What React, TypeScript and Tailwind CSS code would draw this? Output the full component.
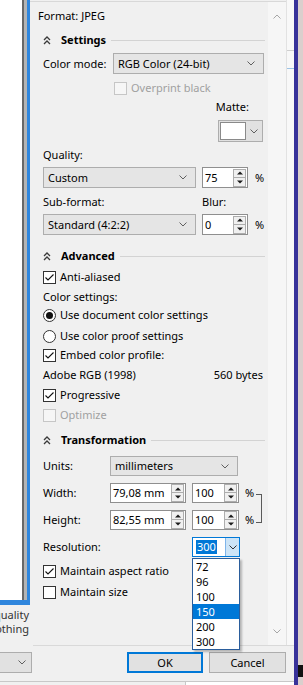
import React from 'react';

const Chevron = ({ color = '#5f5f5f' }: { color?: string }) => (
  <svg width="8" height="5" viewBox="0 0 8 5" className="shrink-0">
    <path d="M0.5 0.5 L4 4 L7.5 0.5" fill="none" stroke={color} strokeWidth="1" />
  </svg>
);

const ChevronUp = ({ color = '#a6a6a6' }: { color?: string }) => (
  <svg width="8" height="5" viewBox="0 0 8 5" className="shrink-0">
    <path d="M0.5 4.5 L4 1 L7.5 4.5" fill="none" stroke={color} strokeWidth="1" />
  </svg>
);

const Select = ({ text, w }: { text: string; w: string }) => (
  <div className={`${w} h-[21px] shrink-0 flex items-center justify-between border border-[#adadad] bg-[#e5e5e5] pl-[4px] pr-[8px]`}>
    <span className="whitespace-nowrap">{text}</span>
    <Chevron />
  </div>
);

const Tri = ({ up }: { up?: boolean }) => (
  <svg width="6" height="4" viewBox="0 0 6 4">
    <path d={up ? 'M0 3.5 L3 0.5 L6 3.5 Z' : 'M0 0.5 L3 3.5 L6 0.5 Z'} fill="#1a1a1a" />
  </svg>
);

const Spin = ({ text, w, h = 'h-[21px]' }: { text: string; w: string; h?: string }) => (
  <div className={`${w} ${h} shrink-0 flex items-center border border-[#8f8f8f] bg-white pl-[2px] pr-[1px]`}>
    <span className="flex-1 whitespace-nowrap">{text}</span>
    <div className="w-[13px] flex flex-col">
      <div className="h-[9px] border border-[#adadad] bg-[#f0f0f0] flex items-center justify-center">
        <Tri up />
      </div>
      <div className="h-[9px] border border-t-0 border-[#adadad] bg-[#f0f0f0] flex items-center justify-center">
        <Tri />
      </div>
    </div>
  </div>
);

const Check = ({
  label,
  checked,
  disabled,
  mt,
}: {
  label: string;
  checked?: boolean;
  disabled?: boolean;
  mt: string;
}) => (
  <div className={`${mt} h-[16px] flex items-center`}>
    <div
      className={`w-[13px] h-[13px] shrink-0 border flex items-center justify-center ${
        disabled ? 'border-[#c6c6c6] bg-[#f6f6f6]' : 'border-[#333333] bg-white'
      }`}
    >
      {checked && (
        <svg width="11" height="11" viewBox="0 0 11 11">
          <path d="M1.5 5.5 L4 8 L9.5 2.5" fill="none" stroke="#111" strokeWidth="1.1" />
        </svg>
      )}
    </div>
    <span className={`ml-[4px] whitespace-nowrap ${disabled ? 'text-[#a0a0a0]' : ''}`}>{label}</span>
  </div>
);

const Radio = ({ label, on, mt }: { label: string; on?: boolean; mt: string }) => (
  <div className={`${mt} h-[16px] flex items-center`}>
    <div className="w-[13px] h-[13px] shrink-0 rounded-full border border-[#333333] bg-white flex items-center justify-center">
      {on && <div className="w-[7px] h-[7px] rounded-full bg-[#111]" />}
    </div>
    <span className="ml-[4px] whitespace-nowrap">{label}</span>
  </div>
);

const Header = ({ title, mt }: { title: string; mt: string }) => (
  <div className={`${mt} h-[16px] flex items-center pl-[5px]`}>
    <svg width="8" height="9" viewBox="0 0 8 9" className="shrink-0">
      <path d="M1 4 L4 1 L7 4 M1 8 L4 5 L7 8" fill="none" stroke="#3a3a3a" strokeWidth="1.3" />
    </svg>
    <span className="ml-[10px] font-bold whitespace-nowrap">{title}</span>
    <div className="flex-1 ml-[5px] mr-[-1px] h-px bg-[#d3d3d3]" />
  </div>
);

const resolutions = ['72', '96', '100', '150', '200', '300'];

export default function App() {
  return (
    <div className="flex w-[303px] h-[685px] overflow-hidden bg-[#f0f0f0] text-[11px] leading-[16px] text-black font-['Noto_Sans',sans-serif]">
      <div className="w-[294px] shrink-0 flex flex-col">
        {/* upper part */}
        <div className="h-[645px] flex">
          {/* preview column */}
          <div className="w-[30px] shrink-0 flex flex-col">
            <div className="h-[605px] bg-[#2f86dd]">
              <div className="h-[600px] w-[27px] flex">
                <div className="w-[22px] bg-white" />
                <div className="w-[2px] bg-[#686868]" />
                <div className="w-[3px] bg-[#b4b4b4]" />
              </div>
            </div>
            <div className="mt-[3px] pr-[1px] flex flex-col items-end overflow-hidden leading-[14px] text-[#333]">
              <span className="whitespace-nowrap">quality</span>
              <span className="whitespace-nowrap">othing</span>
            </div>
          </div>

          {/* settings panel + scrollbar */}
          <div className="w-[256px] shrink-0 flex flex-col">
            <div className="mt-[1px] h-px bg-[#d8d8d8]" />
            <div className="flex flex-1">
              <div className="w-[238px] shrink-0 pl-[8px] pr-[4px] flex flex-col">
                <div className="mt-[6px] h-[16px] flex items-center">Format: JPEG</div>

                <Header title="Settings" mt="mt-[8px]" />
                <div className="pl-[5px] flex flex-col">
                  <div className="mt-[5px] flex items-center">
                    <span className="w-[70px] shrink-0">Color mode:</span>
                    <Select text="RGB Color (24-bit)" w="w-[151px]" />
                  </div>
                  <div className="pl-[71px]">
                    <Check label="Overprint black" disabled mt="mt-[6px]" />
                  </div>
                  <div className="mt-[3px] h-[16px] flex justify-end pr-[15px]">Matte:</div>
                  <div className="mt-[5px] flex justify-end pr-[1px]">
                    <div className="w-[45px] h-[22px] flex border border-[#adadad] bg-[#e1e1e1] p-px">
                      <div className="w-[26px] bg-white border border-[#8a8a8a]" />
                      <div className="flex-1 flex items-center justify-center">
                        <Chevron />
                      </div>
                    </div>
                  </div>
                  <div className="mt-[5px] h-[16px] flex items-center">Quality:</div>
                  <div className="mt-[4px] flex items-center">
                    <Select text="Custom" w="w-[153px]" />
                    <div className="ml-[6px]">
                      <Spin text="75" w="w-[46px]" />
                    </div>
                    <span className="ml-[7px]">%</span>
                  </div>
                  <div className="mt-[6px] h-[16px] flex items-center">
                    <span className="w-[159px] shrink-0">Sub-format:</span>
                    <span>Blur:</span>
                  </div>
                  <div className="mt-[4px] flex items-center">
                    <Select text="Standard (4:2:2)" w="w-[153px]" />
                    <div className="ml-[6px]">
                      <Spin text="0" w="w-[46px]" />
                    </div>
                    <span className="ml-[7px]">%</span>
                  </div>
                </div>

                <Header title="Advanced" mt="mt-[13px]" />
                <div className="pl-[5px] flex flex-col">
                  <Check label="Anti-aliased" checked mt="mt-[5px]" />
                  <div className="mt-[4px] h-[16px] flex items-center">Color settings:</div>
                  <Radio label="Use document color settings" on mt="mt-[2px]" />
                  <Radio label="Use color proof settings" mt="mt-[5px]" />
                  <Check label="Embed color profile:" checked mt="mt-[3px]" />
                  <div className="mt-[4px] h-[16px] flex items-center justify-between pr-[1px]">
                    <span>Adobe RGB (1998)</span>
                    <span>560 bytes</span>
                  </div>
                  <Check label="Progressive" checked mt="mt-[4px]" />
                  <Check label="Optimize" disabled mt="mt-[4px]" />
                </div>

                <Header title="Transformation" mt="mt-[9px]" />
                <div className="pl-[5px] flex flex-col">
                  <div className="mt-[8px] flex items-center">
                    <span className="w-[67px] shrink-0">Units:</span>
                    <Select text="millimeters" w="w-[128px] !h-[20px]" />
                  </div>
                  <div className="mt-[7px] flex">
                    <div className="flex flex-col gap-[7px]">
                      <div className="flex items-center">
                        <span className="w-[67px] shrink-0">Width:</span>
                        <Spin text="79,08 mm" w="w-[76px]" h="h-[20px]" />
                        <div className="ml-[6px]">
                          <Spin text="100" w="w-[47px]" h="h-[20px]" />
                        </div>
                        <span className="ml-[6px]">%</span>
                      </div>
                      <div className="flex items-center">
                        <span className="w-[67px] shrink-0">Height:</span>
                        <Spin text="82,55 mm" w="w-[76px]" h="h-[20px]" />
                        <div className="ml-[6px]">
                          <Spin text="100" w="w-[47px]" h="h-[20px]" />
                        </div>
                        <span className="ml-[6px]">%</span>
                      </div>
                    </div>
                    <div className="ml-[2px] mt-[11px] w-[6px] h-[29px] border-t border-r border-b border-[#5a5a5a]" />
                  </div>
                  <div className="mt-[7px] flex items-center">
                    <span className="w-[149px] shrink-0">Resolution:</span>
                    <div className="relative w-[48px] h-[20px] shrink-0">
                      <div className="w-full h-full flex border border-[#0078d7] bg-white">
                        <div className="flex-1 flex items-center pl-[3px]">
                          <span className="bg-[#0078d7] text-white leading-[14px] px-px">300</span>
                        </div>
                        <div className="w-[14px] bg-[#cce4f7] border-l border-[#7eb4ea] flex items-center justify-center">
                          <Chevron color="#333" />
                        </div>
                      </div>
                      <div className="absolute left-0 top-[21px] w-[48px] border border-[#2a5d9c] bg-white shadow-[2px_2px_2px_rgba(0,0,0,0.25)] z-10">
                        {resolutions.map((r) => (
                          <div
                            key={r}
                            className={`h-[15px] flex items-center pl-[3px] ${
                              r === '150' ? 'bg-[#0078d7] text-white' : ''
                            }`}
                          >
                            {r}
                          </div>
                        ))}
                      </div>
                    </div>
                  </div>
                  <Check label="Maintain aspect ratio" checked mt="mt-[6px]" />
                  <Check label="Maintain size" mt="mt-[5px]" />
                </div>
              </div>

              {/* scrollbar */}
              <div className="w-[18px] shrink-0 bg-[#f6f6f6] flex flex-col items-center justify-between pt-[12px] pb-[11px]">
                <ChevronUp />
                <Chevron color="#a6a6a6" />
              </div>
            </div>
          </div>

          {/* neighbour strip */}
          <div className="w-[8px] shrink-0 bg-[#f8f8f8] border-l border-[#e2e2e2] flex flex-col">
            <div className="mt-[50px] h-px bg-[#cfcfcf]" />
            <div className="mt-[17px] h-px bg-[#9cc3e6]" />
          </div>
        </div>

        {/* lower part */}
        <div className="h-[36px] flex">
          <div className="w-[33px] shrink-0 pt-[7px]">
            <div className="w-[32px] h-[21px] flex items-center justify-end pr-[5px] border border-l-0 border-[#adadad] bg-[#e1e1e1]">
              <Chevron />
            </div>
          </div>
          <div className="flex-1 border-t border-[#d9d9d9] flex justify-end gap-[6px] pr-[8px] pt-[6px]">
            <div className="w-[76px] h-[21px] border-2 border-[#0078d7] bg-[#e1e1e1] flex items-center justify-center">
              OK
            </div>
            <div className="w-[77px] h-[21px] border border-[#adadad] bg-[#e1e1e1] flex items-center justify-center">
              Cancel
            </div>
          </div>
        </div>
        <div className="flex-1 flex border-t border-[#c8c8c8]">
          <div className="w-[185px]" />
          <div className="flex-1 bg-white border-l border-[#c8c8c8]" />
        </div>
      </div>

      <div className="w-[4px] shrink-0 bg-[#38329a]" />
      <div className="w-[5px] shrink-0 bg-[#dacfcd] flex flex-col">
        <div className="mt-[665px] h-[12px] bg-[#111]" />
      </div>
    </div>
  );
}
